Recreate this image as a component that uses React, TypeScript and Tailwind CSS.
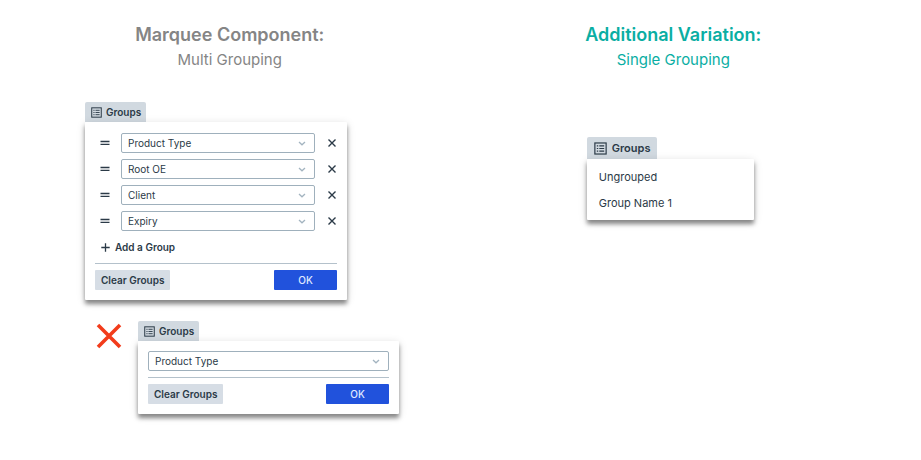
import { useState } from "react";
import type { ReactNode } from "react";
import clsx from "clsx";

const fieldOptions = ["Product Type", "Root OE", "Client", "Expiry"];

function ListIcon({ className }: { className?: string }) {
  return (
    <svg viewBox="0 0 12 12" fill="none" stroke="currentColor" className={className} aria-hidden="true">
      <rect x="0.8" y="0.9" width="10.4" height="10.2" strokeWidth="1.1" />
      <path d="M2.6 3.6h1.3M2.6 6h1.3M2.6 8.4h1.3M4.9 3.6h4.5M4.9 6h4.5M4.9 8.4h4.5" strokeWidth="1" />
    </svg>
  );
}

function ChevronIcon() {
  return (
    <svg
      viewBox="0 0 8 6"
      fill="none"
      stroke="currentColor"
      strokeWidth="1.3"
      className="pointer-events-none absolute right-[9px] top-2 h-[6px] w-[8px] text-[#a3b4c0]"
      aria-hidden="true"
    >
      <path d="M1 1 4 3.8 7 1" />
    </svg>
  );
}

function HandleIcon() {
  return (
    <svg viewBox="0 0 10 6" fill="none" stroke="currentColor" strokeWidth="1.3" className="h-[6px] w-[10px]" aria-hidden="true">
      <path d="M0.5 1.5h9M0.5 4.4h9" />
    </svg>
  );
}

function CrossIcon() {
  return (
    <svg viewBox="0 0 8 8" fill="none" stroke="currentColor" strokeWidth="1.4" className="h-2 w-2" aria-hidden="true">
      <path d="M0.5 0.5l7 7M7.5 0.5l-7 7" />
    </svg>
  );
}

function PlusIcon() {
  return (
    <svg viewBox="0 0 9 9" fill="none" stroke="currentColor" strokeWidth="1.3" className="h-[9px] w-[9px]" aria-hidden="true">
      <path d="M4.5 0.3v8.4M0.3 4.5h8.4" />
    </svg>
  );
}

function Heading({ title, subtitle, className }: { title: string; subtitle: string; className: string }) {
  return (
    <header className={clsx("text-center", className)}>
      <h2 className="text-[18px] font-semibold leading-6">{title}</h2>
      <p className="mt-0.5 text-[15px] leading-[22px]">{subtitle}</p>
    </header>
  );
}

function GroupsButton({ large = false }: { large?: boolean }) {
  return (
    <button
      type="button"
      className={clsx(
        "flex items-center rounded-t-xs bg-[#d1d9e0] font-semibold",
        large ? "h-[22px] gap-[5px] px-[7px] text-[11px]" : "h-5 gap-1 pl-[6px] pr-[5px] text-[10px]"
      )}
    >
      <ListIcon className={large ? "h-[13px] w-[13px]" : "h-[11px] w-[11px]"} />
      Groups
    </button>
  );
}

function Panel({ className, children }: { className?: string; children: ReactNode }) {
  return (
    <div
      className={clsx(
        "rounded-[1px] bg-white shadow-[0_4px_4px_rgba(0,0,0,0.42),0_2px_10px_rgba(0,0,0,0.14)]",
        className
      )}
    >
      {children}
    </div>
  );
}

function GroupSelect({ label, initial }: { label: string; initial: string }) {
  const [value, setValue] = useState(initial);

  return (
    <div className="relative flex-1">
      <select
        aria-label={label}
        value={value}
        onChange={(e) => setValue(e.target.value)}
        className="block h-5 w-full appearance-none rounded-xs border border-[#9fb0bc] bg-white pl-[6px] text-[10px] leading-[18px]"
      >
        {fieldOptions.map((option) => (
          <option key={option}>{option}</option>
        ))}
      </select>
      <ChevronIcon />
    </div>
  );
}

function PanelFooter() {
  return (
    <div className="flex justify-between border-t border-[#b4c1cb] pt-[6px]">
      <button type="button" className="h-5 rounded-[1px] bg-[#d6dde5] px-[6px] text-[10px] font-semibold">
        Clear Groups
      </button>
      <button type="button" className="h-5 w-[63px] rounded-[1px] bg-[#2152dc] text-[10px] font-medium text-[#dfe8ff]">
        OK
      </button>
    </div>
  );
}

function MultiGrouping() {
  const [groups, setGroups] = useState(fieldOptions);

  return (
    <div className="flex w-[262px] flex-col items-start">
      <GroupsButton />
      <Panel className="w-full px-[10px] pb-[10px] pt-[11px]">
        <ul className="flex flex-col gap-[6px]">
          {groups.map((group, i) => (
            <li key={group} className="flex items-center pl-[5px]">
              <button type="button" aria-label={`Move ${group}`} className="mr-[11px]">
                <HandleIcon />
              </button>
              <GroupSelect label={`Group ${i + 1}`} initial={group} />
              <button
                type="button"
                aria-label={`Remove ${group}`}
                className="ml-[13px] mr-[1px]"
                onClick={() => setGroups(groups.filter((g) => g !== group))}
              >
                <CrossIcon />
              </button>
            </li>
          ))}
        </ul>
        <button type="button" className="mb-[6px] mt-[6px] flex h-5 items-center gap-[5px] pl-[6px] text-[10px] font-semibold">
          <PlusIcon />
          Add a Group
        </button>
        <PanelFooter />
      </Panel>
    </div>
  );
}

function IncorrectExample() {
  return (
    <div className="flex items-start gap-4">
      <svg viewBox="0 0 26 26" fill="none" stroke="#f23c1b" strokeWidth="3.6" className="mt-[2px] h-[26px] w-[26px]" role="img" aria-label="Incorrect">
        <path d="M2 2l22 22M24 2 2 24" />
      </svg>
      <div className="flex w-[261px] flex-col items-start">
        <GroupsButton />
        <Panel className="w-full p-[10px]">
          <div className="mb-[6px] flex">
            <GroupSelect label="Group" initial="Product Type" />
          </div>
          <PanelFooter />
        </Panel>
      </div>
    </div>
  );
}

function SingleGrouping() {
  return (
    <div className="flex w-[167px] flex-col items-start">
      <GroupsButton large />
      <Panel className="w-full pb-1 pt-[5px]">
        <ul className="text-[11px]">
          {["Ungrouped", "Group Name 1"].map((name) => (
            <li key={name}>
              <button type="button" className="h-[26px] w-full px-3 text-left">
                {name}
              </button>
            </li>
          ))}
        </ul>
      </Panel>
    </div>
  );
}

export default function App() {
  return (
    <main className="grid min-h-screen grid-cols-2 bg-white pb-10 pl-2 pr-[26px] pt-[23px] font-['Inter','Liberation_Sans',sans-serif] text-[#2b3a47]">
      <section>
        <Heading title="Marquee Component:" subtitle="Multi Grouping" className="text-[#858585]" />
        <div className="mt-[31px] flex flex-col gap-[21px] pl-[77px]">
          <MultiGrouping />
          <div className="pl-[11px]">
            <IncorrectExample />
          </div>
        </div>
      </section>
      <section>
        <Heading title="Additional Variation:" subtitle="Single Grouping" className="text-[#0aaea3]" />
        <div className="mt-[66px] flex justify-center pr-[6px]">
          <SingleGrouping />
        </div>
      </section>
    </main>
  );
}
